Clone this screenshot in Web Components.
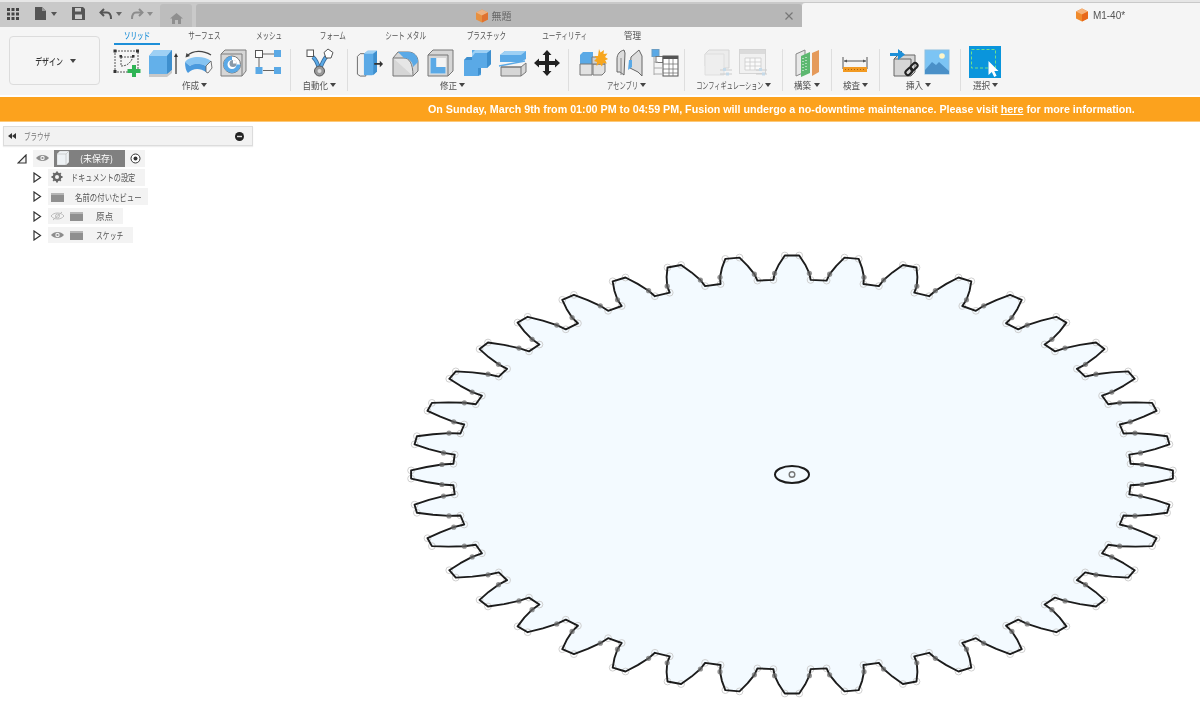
<!DOCTYPE html>
<html lang="ja"><head><meta charset="utf-8"><title>Fusion</title>
<style>
html,body{margin:0;padding:0;width:1200px;height:714px;overflow:hidden;background:#fff;font-family:"Noto Sans CJK JP","Liberation Sans",sans-serif;color:#444}
#app{display:flex;flex-direction:column;height:714px;filter:blur(.25px)}
.root{display:flex;align-items:center;width:71px;height:100%;background:#808080;color:#fff;margin-left:-1px;box-sizing:border-box;padding-left:3px;gap:11px;font-size:9px}
</style></head><body>
<div id="app">
<fx-topbar></fx-topbar>
<fx-ribbon>
  <fx-tab-item slot="tabs" active style="width:46px;margin-left:7px">ソリッド</fx-tab-item>
  <fx-tab-item slot="tabs" style="width:88px">サーフェス</fx-tab-item>
  <fx-tab-item slot="tabs" style="width:42px">メッシュ</fx-tab-item>
  <fx-tab-item slot="tabs" style="width:86px">フォーム</fx-tab-item>
  <fx-tab-item slot="tabs" style="width:60px">シート メタル</fx-tab-item>
  <fx-tab-item slot="tabs" style="width:100px">プラスチック</fx-tab-item>
  <fx-tab-item slot="tabs" style="width:58px">ユーティリティ</fx-tab-item>
  <fx-tab-item slot="tabs" style="width:78px;--sx:.9">管理</fx-tab-item>

  <fx-tool-group label="作成" sx=".9" style="width:183px;--pl:6px;--lr:8px;--gap:7.5px;border:0">
    <fx-icon name="sketch"></fx-icon><fx-icon name="extrude"></fx-icon><fx-icon name="revolve"></fx-icon><fx-icon name="hole"></fx-icon><fx-icon name="pattern"></fx-icon>
  </fx-tool-group>
  <fx-tool-group label="自動化" sx=".9" style="width:57px;--pl:15px;--lr:0px">
    <fx-icon name="auto"></fx-icon>
  </fx-tool-group>
  <fx-tool-group label="修正" sx=".9" style="width:221px;--pl:8px;--lr:11px;--gap:7.7px">
    <fx-icon name="press"></fx-icon><fx-icon name="fillet"></fx-icon><fx-icon name="shell"></fx-icon><fx-icon name="combine"></fx-icon><fx-icon name="split"></fx-icon><fx-icon name="move"></fx-icon>
  </fx-tool-group>
  <fx-tool-group label="アセンブリ" sx=".66" style="width:116px;--pl:10px;--lr:0px;--gap:8px">
    <fx-icon name="comp"></fx-icon><fx-icon name="joint"></fx-icon><fx-icon name="table"></fx-icon>
  </fx-tool-group>
  <fx-tool-group label="コンフィギュレーション" sx=".65" style="width:98px;--pl:19px;--lr:0px;--gap:7px">
    <fx-icon name="cfg1"></fx-icon><fx-icon name="cfg2"></fx-icon>
  </fx-tool-group>
  <fx-tool-group label="構築" sx=".9" style="width:49px;--pl:11px;--lr:0px">
    <fx-icon name="plane"></fx-icon>
  </fx-tool-group>
  <fx-tool-group label="検査" sx=".9" style="width:48px;--pl:10px;--lr:0px">
    <fx-icon name="measure"></fx-icon>
  </fx-tool-group>
  <fx-tool-group label="挿入" sx=".9" style="width:81px;--pl:10px;--lr:3px;--gap:6px">
    <fx-icon name="link"></fx-icon><fx-icon name="image"></fx-icon>
  </fx-tool-group>
  <fx-tool-group label="選択" sx=".9" style="width:50px;--pl:8px;--lr:0px">
    <fx-icon name="select" style="width:32px;margin-top:-3px"></fx-icon>
  </fx-tool-group>
</fx-ribbon>
<fx-banner>On Sunday, March 9th from 01:00 PM to 04:59 PM, Fusion will undergo a no-downtime maintenance. Please visit <u>here</u> for more information.</fx-banner>
<fx-stage>
  <fx-gear></fx-gear>
  <fx-browser>
    <fx-tree-row level="0" style="--w:112px">
      <fx-glyph name="eye"></fx-glyph><span class="root"><svg width="12" height="14" viewBox="0 0 12 14"><path d="M0 3l3-3h9v11l-3 3H0z" fill="#eef2f5" stroke="#ccc" stroke-width=".6"/><path d="M9 3v11M0 3h9M9 3l3-3" fill="none" stroke="#bbb" stroke-width=".6"/></svg><span>(未保存)</span></span>
    </fx-tree-row>
    <fx-tree-row style="--w:97px"><fx-glyph name="gear"></fx-glyph><fx-text sx=".75" style="margin-left:1px">ドキュメントの設定</fx-text></fx-tree-row>
    <fx-tree-row style="--w:100px"><fx-glyph name="folder"></fx-glyph><fx-text sx=".78" style="margin-left:3px">名前の付いたビュー</fx-text></fx-tree-row>
    <fx-tree-row style="--w:75px"><fx-glyph name="eyeoff"></fx-glyph><fx-glyph name="folder"></fx-glyph><fx-text sx=".9" style="margin-left:5px">原点</fx-text></fx-tree-row>
    <fx-tree-row style="--w:85px"><fx-glyph name="eye"></fx-glyph><fx-glyph name="folder"></fx-glyph><fx-text sx=".72" style="margin-left:5px">スケッチ</fx-text></fx-tree-row>
  </fx-browser>
</fx-stage>
</div>
<script>
const FS=9.5;
const cube=`<svg width="14" height="14" viewBox="0 0 14 14"><path d="M7 .5l6 3v7l-6 3-6-3v-7z" fill="#f08a2c"/><path d="M7 .5l6 3-6 3-6-3z" fill="#f6b27a"/><path d="M7 6.500l6-3v7l-6 3z" fill="#e8681a"/></svg>`;
const caret=c=>`<svg width="6" height="4" viewBox="0 0 6 4"><path d="M0 0h6L3 4z" fill="${c}"/></svg>`;
class Base extends HTMLElement{
  constructor(){super();this.attachShadow({mode:'open'})}
  connectedCallback(){this.render&&this.render()}
}
customElements.define('fx-topbar',class extends Base{render(){this.shadowRoot.innerHTML=`<style>
:host{display:flex;height:27px;background:#c9c9c9;border-top:2px solid #e6e6e6;box-sizing:border-box;align-items:stretch;flex:none}
.qat{width:160px;display:flex;align-items:center;padding:0 0 2px 7px;box-sizing:border-box}
.qat svg{flex:none}
.home{width:32px;margin-top:2px;background:#bdbdbd;border-radius:3px 3px 0 0;display:flex;align-items:center;justify-content:center;padding-top:6px;box-sizing:border-box}
.t2{margin:2px 0 0 4px;width:606px;background:#b7b7b7;border-radius:3px 3px 0 0;position:relative;display:flex;align-items:center;justify-content:center;gap:3px;font-size:10px;color:#666;padding-right:12px;box-sizing:border-box}
.t2 svg.x{position:absolute;right:9px;top:8px}
.t2 .c{opacity:.85}
.t3{flex:1;margin-top:1px;background:#f5f5f5;border-radius:3px 0 0 0;display:flex;align-items:center;justify-content:center;gap:4px;font:10px "Liberation Sans",sans-serif;color:#555;padding-left:198px;box-sizing:border-box}
</style>
<div class="qat">
<svg width="12" height="12" viewBox="0 0 12 12" fill="#444"><path d="M0 0h3v3H0zM4.500 0h3v3h-3zM9 0h3v3H9zM0 4.500h3v3H0zM4.500 4.500h3v3h-3zM9 4.500h3v3H9zM0 9h3v3H0zM4.500 9h3v3h-3zM9 9h3v3H9z"/></svg>
<svg style="margin-left:16px" width="11" height="13" viewBox="0 0 11 13"><path d="M0 0h7l4 4v9H0z" fill="#555"/><path d="M7 0l4 4H7z" fill="#999"/></svg>
<span style="margin:0 0 0 5px;display:flex">${caret('#555')}</span>
<svg style="margin-left:15px" width="13" height="13" viewBox="0 0 13 13"><path d="M0 0h11l2 2v11H0z" fill="#555"/><path d="M3 1h6v3.500H3z" fill="#ccc"/><path d="M3 7.500h7V12H3z" fill="#ccc"/></svg>
<svg style="margin-left:14px" width="13" height="12" viewBox="0 0 13 12" fill="none"><path d="M5 1L1.500 4.500 5 8" stroke="#555" stroke-width="2"/><path d="M2 4.500h6c3 0 4 2 4 6.500" stroke="#555" stroke-width="2"/></svg>
<span style="margin-left:4px;display:flex">${caret('#666')}</span>
<svg style="margin-left:9px" width="13" height="12" viewBox="0 0 13 12" fill="none"><path d="M8 1l3.500 3.500L8 8" stroke="#8c8c8c" stroke-width="2"/><path d="M11 4.500H5C2 4.500 1 6.500 1 11" stroke="#8c8c8c" stroke-width="2"/></svg>
<span style="margin-left:3px;display:flex">${caret('#8c8c8c')}</span>
</div>
<div class="home"><svg width="13" height="11" viewBox="0 0 13 11" fill="#8f8f8f"><path d="M6.500 0L13 5.500h-2V11H8V7H5v4H2V5.500H0z"/></svg></div>
<div class="t2"><span class="c" style="display:flex">${cube}</span><span>無題</span>
<svg class="x" width="8" height="8" viewBox="0 0 8 8" stroke="#777" stroke-width="1.200"><path d="M.5.500l7 7M7.500.500l-7 7"/></svg></div>
<div class="t3"><span style="display:flex">${cube}</span><span>M1-40*</span></div>`}});

customElements.define('fx-text',class extends Base{render(){const sx=+(this.getAttribute('sx')||1);const n=this.textContent.trim().length;this.shadowRoot.innerHTML=`<style>
:host{display:inline-block;flex:none;white-space:nowrap;font-size:${FS}px;transform:scaleX(${sx});transform-origin:0 50%;}
</style><slot></slot>`;
this.style.marginRight=(-n*FS*(1-sx)).toFixed(1)+'px';}});

customElements.define('fx-tab-item',class extends Base{render(){const a=this.hasAttribute('active');this.shadowRoot.innerHTML=`<style>
:host{display:flex;flex:none;height:18px;justify-content:center;align-items:center;box-sizing:border-box;font-size:${FS}px;white-space:nowrap;color:${a?'#1d8fd8':'#555'};font-weight:${a?500:400};${a?'border-bottom:2px solid #1d8fd8;':'padding-bottom:2px;'}}
span{display:inline-block;transform:scaleX(var(--sx,.69))}
</style><span><slot></slot></span>`}});

customElements.define('fx-ribbon',class extends Base{render(){this.shadowRoot.innerHTML=`<style>
:host{display:flex;flex:none;height:68px;background:#f5f5f5;box-sizing:border-box;padding:0 0 0 9px}
.d{width:91px;height:49px;margin-top:9px;border:1px solid #dcdcdc;border-radius:4px;box-sizing:border-box;display:flex;align-items:center;justify-content:center;gap:7px;font-size:${FS}px;font-weight:500;color:#333;background:#f5f5f5;padding-left:2px}
.d span{display:inline-block;transform:scaleX(.73);margin:0 -5.100px}
.c{margin-left:7px;display:flex;flex-direction:column}
.tabs{display:flex;margin-top:0;height:19px;padding-top:0}
.g{display:flex;margin-top:3px}
</style>
<div class="d"><span>デザイン</span>${caret('#444')}</div>
<div class="c"><div class="tabs"><slot name="tabs"></slot></div><div class="g"><slot></slot></div></div>`}});

customElements.define('fx-tool-group',class extends Base{render(){const lab=this.getAttribute('label'),sx=+(this.getAttribute('sx')||1),m=(lab.length*FS*(1-sx)/2).toFixed(1);this.shadowRoot.innerHTML=`<style>
:host{display:block;flex:none;box-sizing:border-box;height:42px;border-left:1px solid #dedede}
.i{display:flex;gap:var(--gap,0);padding-left:var(--pl,0);height:28px;margin-bottom:1px}
.l{display:flex;align-items:center;justify-content:center;gap:2px;font-size:${FS}px;color:#555;padding-right:var(--lr,0);margin-top:1px;height:13px;white-space:nowrap}
.l span{display:inline-block;transform:scaleX(${sx});margin:0 -${m}px}
</style><div class="i"><slot></slot></div><div class="l"><span>${lab}</span>${caret('#444')}</div>`}});

const B='#5aa9e6',BD='#3e8fce',G='#d6d6d6';
const icons={
sketch:`<g fill="none" stroke="#555" stroke-width="1"><rect x="2" y="2" width="23" height="21" stroke-dasharray="2 1"/><path d="M8 8v9M8 8h12M8 17c7 0 10-4 12-9" stroke-dasharray="2 1"/></g><g fill="#333"><rect x="0.500" y="0.500" width="3" height="3"/><rect x="23" y="0.500" width="3" height="3"/><rect x="0.500" y="21" width="3" height="3"/><rect x="6.500" y="6" width="2.500" height="2.500"/><rect x="19" y="6" width="2.500" height="2.500"/></g><path d="M19 16h4v4h4.500v4H23v4h-4v-4h-4.500v-4H19z" fill="#2fb455"/>`,
extrude:`<path d="M0 7l5-6h18v20l-5 4H0z" fill="${B}"/><path d="M0 7h18v18H0z" fill="#63b0ea"/><path d="M0 7l5-6h18l-5 6z" fill="#9ed0f4"/><path d="M18 7l5-6v20l-5 5z" fill="${BD}"/><path d="M0 25h18l5-4v3l-5 4H0z" fill="#c8c8c8"/><path d="M27 4l-2 4h1.400v17h1.200V8H29z" fill="#333"/>`,
revolve:`<path d="M1 13C5 7 20 6 27 12l-5 5c-6-3-12-3-16 0z" fill="#86c4f2"/><path d="M1 13l5 4c4-3 10-3 16 0v6c-6-4-13-4-18 1-2-2-3-6-3-11z" fill="#4a9ade"/><path d="M22 17l5-5 1 7-4 5-2-1z" fill="#f6f6f6" stroke="#555" stroke-width=".8"/><path d="M3 7C9 1 19 1 27 6" fill="none" stroke="#444" stroke-width="1.200"/><path d="M1.500 8.500l1-4.500 3.500 3z" fill="#444"/>`,
hole:`<path d="M1 5l4-4h21v21l-4 5H1z" fill="${G}" stroke="#7d7d7d"/><path d="M1 5h21v22" fill="none" stroke="#7d7d7d"/><circle cx="12" cy="15.500" r="8.500" fill="#fff" stroke="#777"/><path d="M12 7a8.500 8.500 0 1 0 8.500 8.500h-4a4.500 4.500 0 1 1-4.500-4.500z" fill="${B}"/><circle cx="13" cy="14.500" r="3.500" fill="#8a9aa8"/><path d="M13 11a3.500 3.500 0 0 1 3.500 3.500H13z" fill="#fff"/>`,
pattern:`<rect x="0.500" y="1.500" width="7" height="7" fill="#fff" stroke="#555"/><rect x="19" y="1" width="7" height="7" fill="${B}"/><rect x="0.500" y="18" width="7" height="7" fill="${B}"/><rect x="19" y="18" width="7" height="7" fill="${B}"/><path d="M8 5h11M8 21.500h11M4 9v9" stroke="#666" stroke-width="1" fill="none"/>`,
auto:`<path d="M7 8c4 4 5 7 6 12M21 7c-4 4-5 8-7 13" stroke="#3b6d9c" stroke-width="4" fill="none"/><path d="M7 8c4 4 5 7 6 12M21 7c-4 4-5 8-7 13" stroke="${B}" stroke-width="2.400" fill="none"/><rect x="1" y="1" width="6.500" height="6.500" fill="#fff" stroke="#555"/><path d="M22 0l5 3.500-2 5.500h-5l-2-5.500z" fill="#fff" stroke="#555"/><circle cx="13.500" cy="22" r="5" fill="#999" stroke="#555"/><circle cx="13.500" cy="22" r="2" fill="#ddd"/>`,
press:`<path d="M1 7l3-3h6v24H4l-3-2z" fill="#f2f2f2" stroke="#666"/><path d="M8 4l4-3h10v22l-5 4H8z" fill="${B}"/><path d="M8 4l4-3h10l-4 3z" fill="#9ed0f4"/><path d="M18 4l4-3v22l-4 4z" fill="${BD}"/><path d="M19 14h6v-2.500l3.500 3.500-3.500 3.500V16h-6z" fill="#333"/>`,
fillet:`<path d="M1 9l5-6h10c6 0 10 4 10 10v9l-5 5H1z" fill="${G}" stroke="#777"/><path d="M1 9h11c5 0 9 5 9 18" fill="#e6e6e6" stroke="#777"/><path d="M6 3h10c6 0 10 4 10 10l-5 5c0-5-4-9-9-9z" fill="${B}"/>`,
shell:`<path d="M1 6l5-5h20v21l-5 5H1z" fill="${G}" stroke="#777"/><path d="M1 6h20v21" fill="none" stroke="#777"/><rect x="3.500" y="9" width="15" height="15.500" fill="#fff"/><path d="M3.500 9h6v9h9v6.500h-15z" fill="${B}"/><path d="M18.500 9h-9v9h9z" fill="#f4f4f4"/>`,
combine:`<path d="M9 1h16l3-0v14l-4 4h-6v7l-3 1H1V11l3-3h5z" fill="${B}"/><path d="M9 8V4l3-3h16l-4 3H12z" fill="#9ed0f4"/><path d="M24 4l4-3v14l-4 4z" fill="${BD}"/><path d="M1 11l3-3h5v3zM15 19v8l3-3v-5z" fill="${BD}"/>`,
split:`<path d="M1 6l5-4h21v8l-5 3H1z" fill="${B}"/><path d="M1 6l5-4h21l-5 4z" fill="#9ed0f4"/><path d="M0 16l26-5" stroke="#5aa9e6" stroke-width="1.500" transform="translate(0 1)"/><path d="M2 18h20l5-4v9l-5 4H2z" fill="${G}" stroke="#777"/><path d="M2 18h20v9" fill="none" stroke="#777"/>`,
move:`<path d="M13 1l4.500 5H15v6h6V9.500l5 4.500-5 4.500V16h-6v6h2.500L13 27l-4.500-5H11v-6H5v2.500L0 14l5-4.500V12h6V6H8.500z" fill="#222"/>`,
comp:`<path d="M1 6l3-3h10v12H1z" fill="${B}"/><path d="M1 15h12v11H1zM14 15h12v8l-3 3H14z" fill="#e2e2e2" stroke="#777"/><path d="M13 8l9 0 4 4v3H13z" fill="#cfcfcf" stroke="#777"/><path d="M20 0l1.500 3.500L25 1l-.5 4 4-.5L26 8l3 2-3 1.500 2 3-4-.5-1 3.500-2.500-3-3 2.500.5-4-3-1 2.500-2.500-2-2.500 3.500 0z" fill="#f7a61e"/>`,
joint:`<path d="M2 10c0-5 3-8 7-9l1 3-1 22-4-3-3 0z" fill="#ddd" stroke="#666"/><path d="M6 9v17" stroke="#888"/><path d="M16 8l8-7 3 6v20l-4-4-8-4z" fill="#ddd" stroke="#666"/><path d="M14 11l3 0v7l-4 3z" fill="${B}"/>`,
table:`<rect x="1" y="0.500" width="7" height="7" fill="${B}" stroke="#6b9ec4"/><rect x="5" y="7.500" width="7" height="6" fill="#fff" stroke="#777"/><rect x="12" y="7" width="15" height="20" fill="#fff" stroke="#555"/><path d="M12 7h15v3H12z" fill="#555"/><path d="M12 15h15M12 20h15M12 24h15M18 10v17M22 10v17" stroke="#777" stroke-width=".8"/><path d="M3 8v18M3 13h4M3 19h9M3 25h9" stroke="#aaa"/>`,
cfg1:`<g opacity=".55"><path d="M1 5l4-4h20v18H5v-2H1z" fill="#e6e6e6" stroke="#bbb"/><path d="M1 5h19v21H1z" fill="#eaeaea" stroke="#ccc"/><path d="M16 21h12M16 25h12" stroke="#aaa"/><rect x="19" y="19" width="3" height="3" fill="#9fc4e0"/><rect x="22" y="23.500" width="3" height="3" fill="#9fc4e0"/></g>`,
cfg2:`<g opacity=".55"><rect x="0.500" y="0.500" width="26" height="24" fill="#eee" stroke="#bbb"/><path d="M1 1h25v4H1z" fill="#c6c6c6"/><path d="M6 9h16v12H6zM6 13h16M6 17h16M11 9v12M16 9v12" fill="#fff" stroke="#aaa" stroke-width=".8"/><path d="M17 21h11M17 25h11" stroke="#aaa"/><rect x="20" y="19" width="3" height="3" fill="#9fc4e0"/><rect x="23" y="23.500" width="3" height="3" fill="#9fc4e0"/></g>`,
plane:`<path d="M2 5l9-4v22l-9 4z" fill="#e8e8e8" stroke="#888"/><path d="M7 7l9-4v21l-9 4z" fill="#5db870"/><path d="M18 4l7-3v22l-7 4z" fill="#e59a5a"/><path d="M9 9v14M12 8v14" stroke="#fff" stroke-width="1" stroke-dasharray="1 2"/>`,
measure:`<path d="M1 8v12M25 8v12M2 12h22" stroke="#555" fill="none"/><path d="M2 12l3-1.500v3zM24 12l-3-1.500v3z" fill="#555"/><rect x="1" y="18" width="24" height="5" fill="#f29a22"/><path d="M3 20.500h20" stroke="#a86210" stroke-dasharray="1 2" stroke-width="1"/>`,
link:`<path d="M4 10l4-4h17v17l-4 4H4z" fill="${G}" stroke="#666"/><path d="M4 10h17v17" fill="none" stroke="#666"/><path d="M8 6l4-4" stroke="#666" fill="none"/><path d="M0 4h8V0l7 5.500L8 11V7H0z" fill="#1d8fd8"/><g fill="none" stroke="#222" stroke-width="2"><rect x="15" y="20" width="8" height="5" rx="2.500" transform="rotate(-45 19 22.500)"/><rect x="20" y="15" width="8" height="5" rx="2.500" transform="rotate(-45 24 17.500)"/></g>`,
image:`<rect x="1" y="1" width="24" height="24" fill="#7cc4f4" stroke="#8dbfe0"/><circle cx="18" cy="7" r="2.800" fill="#fff6c8"/><path d="M1 21l7-8 4 3 3-3 10 9v3H1z" fill="#4a90c8"/>`,
select:`<rect width="32" height="32" fill="#0a95dc"/><rect x="2.500" y="3.500" width="24" height="18.500" fill="none" stroke="#6fe08a" stroke-width="1" stroke-dasharray="3 2"/><path d="M19.500 15v14l3.300-3 2.400 5 2.400-1.200-2.300-4.800h4.200z" fill="#fff"/>`
};
customElements.define('fx-icon',class extends Base{render(){const n=this.getAttribute('name');const w=n==='select'?32:28;const h=n==='select'?32:28;const wide=n==='press'?'-0.500 -0.500 30 29':`0 0 ${w} ${h}`;this.shadowRoot.innerHTML=`<style>:host{display:block;flex:none;width:28px;height:28px}svg{display:block;overflow:visible}</style><svg width="${w}" height="${h}" viewBox="${wide}">${icons[n]||''}</svg>`}});

customElements.define('fx-banner',class extends Base{render(){this.shadowRoot.innerHTML=`<style>
:host{display:flex;flex:none;height:25px;margin-top:2px;background:#fca21d;align-items:center;box-sizing:border-box;padding:1px 0 0 428px;color:#fff;font:bold 10.730px/1 "Liberation Sans",sans-serif;white-space:nowrap;border-bottom:1px solid #fcc97a}
</style><span><slot></slot></span>`}});

customElements.define('fx-stage',class extends Base{render(){this.shadowRoot.innerHTML=`<style>
:host{display:block;flex:1;position:relative;background:#fff;overflow:hidden}
</style><slot></slot>`}});

customElements.define('fx-browser',class extends Base{render(){this.shadowRoot.innerHTML=`<style>
:host{display:block;position:relative;width:250px;margin:4px 0 0 3px;font-size:${FS}px;color:#555}
.h{height:20px;background:#f2f2f2;border:1px solid #dcdcdc;box-sizing:border-box;display:flex;align-items:center;padding:0 8px 0 4px;box-shadow:0 1px 1px #eee}
.h span{margin-left:8px;flex:1;color:#777}
.h span b{font-weight:400;display:inline-block;transform:scaleX(.69);transform-origin:0 50%}
.tree{display:flex;flex-direction:column;margin-top:4px;gap:2.700px}
</style>
<div class="h"><svg width="8" height="6" viewBox="0 0 8 6" fill="#333"><path d="M4 0v6L0 3zM8 0v6L4 3z"/></svg><span><b>ブラウザ</b></span>
<svg width="9" height="9" viewBox="0 0 9 9"><circle cx="4.500" cy="4.500" r="4.500" fill="#222"/><path d="M2 3.800h5v1.400H2z" fill="#ddd"/></svg></div>
<div class="tree"><slot></slot></div>`}});

customElements.define('fx-tree-row',class extends Base{render(){const root=this.getAttribute('level')==='0';
const tri=root?`<svg style="position:absolute;left:14px;top:4px" width="10" height="10" viewBox="0 0 10 10"><path d="M9 1v8H1z" fill="#f4f4f4" stroke="#333" stroke-width="1.200"/></svg>`
:`<svg style="position:absolute;left:30px;top:3px" width="9" height="11" viewBox="0 0 9 11"><path d="M1 1l6.500 4.500L1 10z" fill="#fff" stroke="#333" stroke-width="1.200"/></svg>`;
this.shadowRoot.innerHTML=`<style>
:host{display:block;position:relative;height:16.500px;padding-left:${root?30:45}px;color:#555;white-space:nowrap}
.b{display:flex;align-items:center;height:100%;width:var(--w);background:#f3f3f3;position:relative;padding-left:3px;box-sizing:border-box}
::slotted(fx-glyph){margin-right:6px}
.radio{position:absolute;right:4px;top:2.500px}
</style>${tri}<div class="b"><slot></slot>${root?`<svg class="radio" width="11" height="11" viewBox="0 0 11 11"><circle cx="5.500" cy="5.500" r="4.500" fill="#fff" stroke="#333"/><circle cx="5.500" cy="5.500" r="2" fill="#333"/></svg>`:''}</div>`;
}});

customElements.define('fx-glyph',class extends Base{render(){const n=this.getAttribute('name');const p={
eye:`<path d="M0 6c3-4 10-4 13 0-3 4-10 4-13 0z" fill="#8c8c8c"/><circle cx="6.500" cy="6" r="2.200" fill="#f3f3f3"/><circle cx="6.500" cy="6" r="1.100" fill="#8c8c8c"/>`,
eyeoff:`<path d="M0 6c3-4 10-4 13 0-3 4-10 4-13 0z" fill="none" stroke="#bcbcbc"/><circle cx="6.500" cy="6" r="2" fill="none" stroke="#bcbcbc"/><path d="M2 10l9-8" stroke="#bcbcbc"/>`,
gear:`<circle cx="6" cy="6" r="3.200" fill="none" stroke="#666" stroke-width="2.400"/><path d="M6 .5v11M.5 6h11M2.200 2.200l7.600 7.600M9.800 2.200l-7.600 7.600" stroke="#666" stroke-width="1.800" stroke-dasharray="1.800 7.400"/>`,
folder:`<path d="M0 2h5l1 1.500h7V11H0z" fill="#8f8f8f"/><path d="M0 2h13v2H0z" fill="#b5b5b5"/>`}[n];
this.shadowRoot.innerHTML=`<style>:host{display:inline-flex;flex:none;width:${n==='folder'?15:13}px;height:12px}</style><svg width="${n==='folder'?15:13}" height="12" viewBox="0 0 ${n==='folder'?15:13} 12">${p}</svg>`}});

customElements.define('fx-gear',class extends Base{render(){
const cx=792,cy=474.5-122,RX=381,RY=219;
const P=(r,a)=>[cx+RX*r*Math.sin(a*Math.PI/180),cy-RY*r*Math.cos(a*Math.PI/180)];
let line=[],rings=[],dots=[];
for(let i=0;i<40;i++){const c=i*9;
 const seq=[[.89,-3.15],[.92,-2.85],[.96,-2.05],[1,-1.08],[1,1.08],[.96,2.05],[.92,2.85],[.89,3.15]];
 seq.forEach(([r,d],k)=>{const p=P(r,c+d);line.push(p);
   if(k==0||k==3||k==4||k==7)rings.push(p);
   if(k==1||k==6)dots.push(p);});
}
const d='M'+line.map(p=>p[0].toFixed(1)+' '+p[1].toFixed(1)).join('L')+'Z';
this.shadowRoot.innerHTML=`<style>:host{position:absolute;left:0;top:0;width:1200px;height:592px;display:block}svg{display:block;filter:blur(.35px)}</style>
<svg width="1200" height="592" viewBox="0 0 1200 592">
<path d="${d}" fill="#f3faff"/>
${rings.map(p=>`<circle cx="${p[0].toFixed(1)}" cy="${p[1].toFixed(1)}" r="3.400" fill="none" stroke="#cfcfcf" stroke-width="1"/>`).join('')}
<path d="${d}" fill="none" stroke="#1c1c1c" stroke-width="1.900" stroke-linejoin="round"/>
${dots.map(p=>`<circle cx="${p[0].toFixed(1)}" cy="${p[1].toFixed(1)}" r="2.600" fill="#666" opacity=".7"/>`).join('')}
<ellipse cx="792" cy="${cy}" rx="17" ry="8.500" fill="none" stroke="#1c1c1c" stroke-width="2"/>
<circle cx="792" cy="${cy}" r="2.800" fill="none" stroke="#777" stroke-width="1.400"/>
</svg>`}});
</script>
</body></html>
